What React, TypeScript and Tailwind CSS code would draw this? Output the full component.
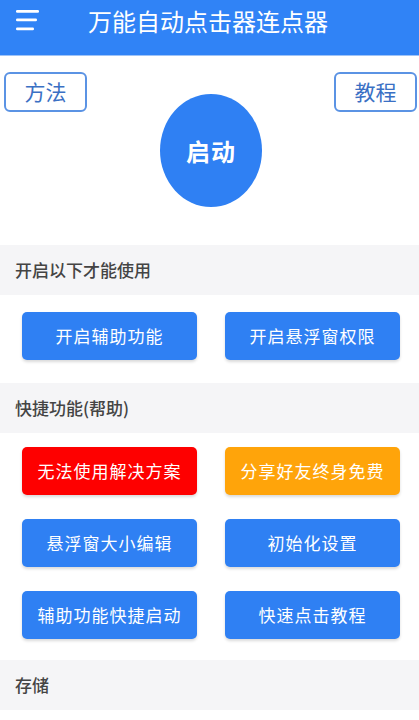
import React from 'react'

const font = { fontFamily: '"Noto Sans CJK SC", "Noto Sans", sans-serif' }

function SectionTitle({ title }: { title: string }) {
  return (
    <div className="h-[50px] bg-[#f5f5f7] flex items-center px-[15px] text-[17px] font-medium text-[#444]">
      {title}
    </div>
  )
}

function Btn({ label, color }: { label: string; color: string }) {
  return (
    <button className={`h-[48px] w-[175px] rounded-[5px] text-white text-[17px] tracking-[1px] shadow-[0_2px_3px_rgba(0,0,0,0.15)] ${color}`}>
      {label}
    </button>
  )
}

export default function App() {
  return (
    <div className="w-[419px] h-[720px] bg-white overflow-hidden" style={font}>
      <div className="h-[56px] bg-[#3083f6] flex items-start border-b border-[#9ec3f7]">
        <div className="w-[88px] pl-[16px] pt-[10px]">
          <svg width="24" height="21" viewBox="0 0 24 21">
            <rect x="0" y="0" width="23" height="2.8" rx="1.2" fill="white" />
            <rect x="0" y="8.5" width="21" height="2.8" rx="1.2" fill="white" />
            <rect x="0" y="17.5" width="18" height="2.8" rx="1.2" fill="white" />
          </svg>
        </div>
        <div className="text-white text-[24px] pt-[9px] leading-none">万能自动点击器连点器</div>
      </div>

      <div className="relative h-[189px]">
        <div className="flex justify-between pl-[4px] pr-[2px] pt-[16px]">
          <button className="w-[83px] h-[40px] border-2 border-[#5b93e4] rounded-[6px] text-[#3a70c4] text-[21px]">方法</button>
          <button className="w-[83px] h-[40px] border-2 border-[#5b93e4] rounded-[6px] text-[#3a70c4] text-[21px]">教程</button>
        </div>
        <div className="flex justify-center -mt-[18px] pl-[3px]">
          <div className="w-[102px] h-[113px] rounded-[50%] bg-[#2f80f3] flex items-center justify-center text-white text-[24px] font-bold tracking-[1px]">
            启动
          </div>
        </div>
      </div>

      <SectionTitle title="开启以下才能使用" />
      <div className="flex justify-between pl-[22px] pr-[19px] pt-[17px] pb-[23px]">
        <Btn label="开启辅助功能" color="bg-[#2f80f3]" />
        <Btn label="开启悬浮窗权限" color="bg-[#2f80f3]" />
      </div>

      <SectionTitle title="快捷功能(帮助)" />
      <div className="flex flex-col gap-[24px] pl-[22px] pr-[19px] pt-[14px] pb-[21px]">
        <div className="flex justify-between">
          <Btn label="无法使用解决方案" color="bg-[#fe0000]" />
          <Btn label="分享好友终身免费" color="bg-[#ffa40a]" />
        </div>
        <div className="flex justify-between">
          <Btn label="悬浮窗大小编辑" color="bg-[#2f80f3]" />
          <Btn label="初始化设置" color="bg-[#2f80f3]" />
        </div>
        <div className="flex justify-between">
          <Btn label="辅助功能快捷启动" color="bg-[#2f80f3]" />
          <Btn label="快速点击教程" color="bg-[#2f80f3]" />
        </div>
      </div>

      <SectionTitle title="存储" />
    </div>
  )
}
